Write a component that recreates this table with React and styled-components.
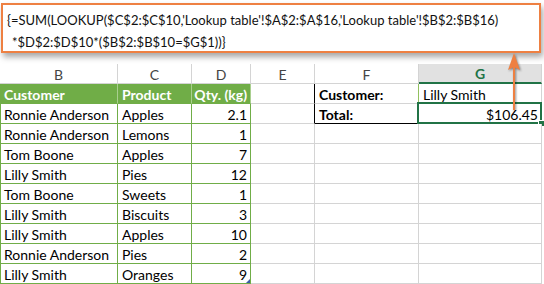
import React from "react";
import styled, { createGlobalStyle, css } from "styled-components";

const GlobalStyle = createGlobalStyle`
  html, body { margin: 0; padding: 0; background: #fff; }
  body { font-family: "Lato", "Open Sans", sans-serif; }
`;

const GREEN = "#70ad47";
const DARK_GREEN = "#217346";
const GRID = "#d4d4d4";
const ORANGE = "#ee8042";

const Page = styled.div`
  position: relative;
  width: 544px;
  height: 284px;
  overflow: hidden;
  background: #fff;
`;

const FormulaBar = styled.div`
  box-sizing: border-box;
  margin: 3px 3px 0 1px;
  height: 50px;
  border: 2px solid ${ORANGE};
  background: #fff;
  padding: 4px 0 0 4px;
  box-shadow: 2px 4px 6px rgba(0, 0, 0, 0.35);
  font-size: 13px;
  line-height: 22px;
  color: #111;
  white-space: pre;
`;

const FormulaLine = styled.div`
  padding-left: ${(p) => p.$indent || 0}px;
`;

const Sheet = styled.div`
  margin-top: 11px;
  display: grid;
  grid-template-columns: 118px 74px 59px 64px 104px 123px;
  grid-auto-rows: 20px;
  font-size: 14px;
`;

const ColHead = styled.div`
  box-sizing: border-box;
  display: flex;
  align-items: center;
  justify-content: center;
  color: #444;
  background: #fff;
  border-right: 1px solid ${GRID};
  border-bottom: 1px solid ${GRID};
  padding-top: 1px;
  ${(p) =>
    p.$active &&
    css`
      background: #e1e1e1;
      color: ${DARK_GREEN};
      font-weight: bold;
      border-bottom: 2px solid ${DARK_GREEN};
    `}
`;

const Cell = styled.div`
  position: relative;
  box-sizing: border-box;
  display: flex;
  align-items: center;
  padding: 1px 3px 0 4px;
  white-space: nowrap;
  color: #000;
  justify-content: ${(p) => (p.$right ? "flex-end" : "flex-start")};
  font-weight: ${(p) => (p.$bold ? "bold" : "normal")};
  background: ${(p) => p.$bg || "#fff"};
  border-right: 1px solid ${(p) => p.$rc || GRID};
  border-bottom: 1px solid ${(p) => p.$bc || GRID};
  border-left: ${(p) => (p.$lc ? `1px solid ${p.$lc}` : "none")};
  ${(p) => p.$lc && css`padding-left: 3px;`}
`;

const TableHead = styled(Cell).attrs({ $bg: GREEN, $rc: "#a9cf8f", $bc: GREEN, $bold: true })`
  color: #fff;
`;

const ResizeHandle = styled.span`
  position: absolute;
  right: 0;
  bottom: 0;
  width: 0;
  height: 0;
  border-left: 4px solid transparent;
  border-bottom: 4px solid #3b5ba5;
`;

const Selected = styled(Cell)`
  &::before {
    content: "";
    position: absolute;
    top: -2px;
    left: -2px;
    right: -1px;
    bottom: -1px;
    border: 2px solid ${DARK_GREEN};
    pointer-events: none;
  }
  &::after {
    content: "";
    position: absolute;
    right: -4px;
    bottom: -4px;
    width: 5px;
    height: 5px;
    background: ${DARK_GREEN};
    border: 1px solid #fff;
  }
`;

const Arrow = styled.svg`
  position: absolute;
  left: 504px;
  top: 50px;
  overflow: visible;
  filter: drop-shadow(1px 1px 1px rgba(0, 0, 0, 0.45));
`;

const rows = [
  ["Ronnie Anderson", "Apples", "2.1"],
  ["Ronnie Anderson", "Lemons", "1"],
  ["Tom Boone", "Apples", "7"],
  ["Lilly Smith", "Pies", "12"],
  ["Tom Boone", "Sweets", "1"],
  ["Lilly Smith", "Biscuits", "3"],
  ["Lilly Smith", "Apples", "10"],
  ["Ronnie Anderson", "Pies", "2"],
  ["Lilly Smith", "Oranges", "9"],
];

export default function App() {
  return (
    <Page>
      <GlobalStyle />
      <FormulaBar>
        <FormulaLine>{"{=SUM(LOOKUP($C$2:$C$10,'Lookup table'!$A$2:$A$16,'Lookup table'!$B$2:$B$16)"}</FormulaLine>
        <FormulaLine $indent={5}>{"*$D$2:$D$10*($B$2:$B$10=$G$1))}"}</FormulaLine>
      </FormulaBar>
      <Sheet>
        <ColHead>B</ColHead>
        <ColHead>C</ColHead>
        <ColHead>D</ColHead>
        <ColHead>E</ColHead>
        <ColHead>F</ColHead>
        <ColHead $active>G</ColHead>

        <TableHead $lc={GREEN}>Customer</TableHead>
        <TableHead>Product</TableHead>
        <TableHead $rc={GREEN} $right>Qty. (kg)</TableHead>
        <Cell $rc="#000">{""}</Cell>
        <Cell $bold $rc="#92c15f">Customer:</Cell>
        <Cell>Lilly Smith</Cell>

        {rows.map((r, i) => (
          <React.Fragment key={i}>
            <Cell $lc={GREEN} $rc={GREEN} $bc={GREEN}>{r[0]}</Cell>
            <Cell $rc={GREEN} $bc={GREEN}>{r[1]}</Cell>
            <Cell $rc={GREEN} $bc={GREEN} $right>
              {r[2]}
              {i === rows.length - 1 && <ResizeHandle />}
            </Cell>
            <Cell $rc={i === 0 ? "#000" : GRID}>{""}</Cell>
            <Cell $bold={i === 0} $bc={i === 0 ? "#000" : GRID}>{i === 0 ? "Total:" : ""}</Cell>
            {i === 0 ? <Selected $right>$106.45</Selected> : <Cell>{""}</Cell>}
          </React.Fragment>
        ))}
      </Sheet>
      <Arrow width="20" height="70" viewBox="0 0 20 70">
        <line x1="10" y1="16" x2="10" y2="60" stroke={ORANGE} strokeWidth="2" />
        <path d="M10 3 L16 20 L10 17 L4 20 Z" fill={ORANGE} />
      </Arrow>
    </Page>
  );
}
